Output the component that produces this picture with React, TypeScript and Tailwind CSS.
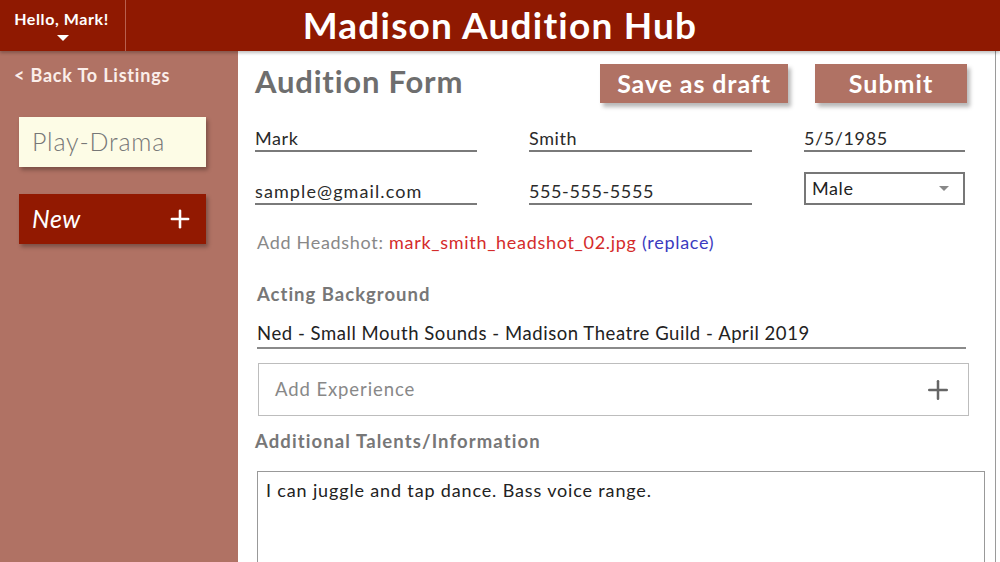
import { Plus } from "lucide-react";

const font = { fontFamily: "Lato, 'Open Sans', sans-serif" };

const Line = ({ text, className = "" }: { text: string; className?: string }) => (
  <div className={"border-b-2 border-[#7a7a7a] text-[18px] leading-[22px] text-[#2a2a2a] pb-[1px] tracking-[0.6px] " + className}>
    {text}
  </div>
);

export default function App() {
  return (
    <div className="w-[1000px] h-[562px] overflow-hidden flex flex-col bg-white font-['Lato',sans-serif]">
      <header className="h-[51px] shrink-0 bg-[#8f1901] flex shadow-[0_2px_3px_rgba(0,0,0,0.25)] z-10">
        <div className="w-[126px] border-r border-[#b8604f] flex flex-col items-center pt-[9px]">
          <span className="text-white font-bold text-[16px] leading-[20px] tracking-[0.6px] pr-[2px]">Hello, Mark!</span>
          <span className="mt-[6px] w-0 h-0 border-l-[6px] border-r-[6px] border-t-[6px] border-l-transparent border-r-transparent border-t-white" />
        </div>
        <div className="flex-1 flex items-center justify-center pr-[126px]">
          <h1 className="text-white font-bold text-[37px] leading-none tracking-[1.2px] pb-[2px]">Madison Audition Hub</h1>
        </div>
      </header>

      <div className="flex flex-1 min-h-0">
        <aside className="w-[238px] shrink-0 bg-[#b07264] pt-[13px] pl-[14px]">
          <div className="text-[#fbeeea] font-bold text-[18px] leading-[22px] tracking-[0.8px]">&lt; Back To Listings</div>
          <div className="mt-[31px] ml-[5px] w-[187px] h-[50px] bg-[#fdfce6] shadow-[2px_3px_4px_rgba(0,0,0,0.3)] flex items-center pl-[13px] text-[25px] tracking-[0.8px] text-[#777] font-light">
            Play-Drama
          </div>
          <div className="mt-[27px] ml-[5px] w-[187px] h-[50px] bg-[#921901] shadow-[2px_3px_4px_rgba(0,0,0,0.3)] flex items-center justify-between pl-[13px] pr-[12px] text-white">
            <span className="italic text-[25px] tracking-[0.5px]">New</span>
            <Plus size={28} strokeWidth={2.2} />
          </div>
        </aside>

        <main className="w-[758px] border-r border-[#9a9a9a] pl-[17px] pr-[28px] pt-[13px]" style={font}>
          <div className="flex items-start">
            <h2 className="text-[31px] font-bold text-[#6e6e6e] leading-none tracking-[0.8px] w-[345px] pt-[2px]">Audition Form</h2>
            <button className="w-[188px] h-[39px] bg-[#b07264] text-white font-bold text-[25px] tracking-[0.9px] shadow-[3px_4px_4px_rgba(0,0,0,0.28)]">
              Save as draft
            </button>
            <button className="ml-[27px] w-[152px] h-[39px] bg-[#b07264] text-white font-bold text-[25px] tracking-[1px] shadow-[3px_4px_4px_rgba(0,0,0,0.28)]">
              Submit
            </button>
          </div>

          <div className="mt-[24px] grid grid-cols-[222px_223px_161px] gap-x-[52px] items-end">
            <Line text="Mark" />
            <Line text="Smith" />
            <Line text="5/5/1985" />
          </div>
          <div className="mt-[20px] grid grid-cols-[222px_223px_161px] gap-x-[52px] items-end">
            <Line text="sample@gmail.com" className="tracking-[1.1px]" />
            <Line text="555-555-5555" />
            <div className="h-[33px] border-2 border-[#777] flex items-center justify-between pl-[6px] pr-[14px] text-[18px] tracking-[0.6px] text-[#222]">
              <span>Male</span>
              <span className="w-0 h-0 border-l-[5px] border-r-[5px] border-t-[5px] border-l-transparent border-r-transparent border-t-[#888]" />
            </div>
          </div>

          <div className="mt-[27px] pl-[2px] text-[18px] tracking-[0.7px] leading-[20px]">
            <span className="text-[#888]">Add Headshot: </span>
            <span className="text-[#d42b2b]">mark_smith_headshot_02.jpg</span>{" "}
            <span className="text-[#3b3bc0]">(replace)</span>
          </div>

          <div className="mt-[31px] pl-[2px] text-[18.5px] font-bold text-[#777] leading-[22px] tracking-[1px]">Acting Background</div>
          <div className="mt-[17px] ml-[2px] w-[709px] border-b-2 border-[#8a8a8a] text-[18.5px] tracking-[0.55px] text-[#222] leading-[22px] pb-[3px]">
            Ned - Small Mouth Sounds - Madison Theatre Guild - April 2019
          </div>

          <div className="mt-[14px] ml-[3px] w-[711px] h-[53px] border border-[#bdbdbd] flex items-center justify-between pl-[16px] pr-[15px]">
            <span className="text-[18.5px] tracking-[0.9px] text-[#888]">Add Experience</span>
            <Plus size={30} strokeWidth={2} className="text-[#666]" />
          </div>

          <div className="mt-[14px] text-[18.5px] font-bold text-[#777] leading-[22px] tracking-[1.1px]">Additional Talents/Information</div>

          <div className="mt-[19px] ml-[2px] w-[728px] h-[120px] border border-[#999] px-[8px] pt-[8px] text-[18px] tracking-[0.85px] text-[#222] leading-[20px]">
            I can juggle and tap dance. Bass voice range.
          </div>
        </main>
      </div>
    </div>
  );
}
